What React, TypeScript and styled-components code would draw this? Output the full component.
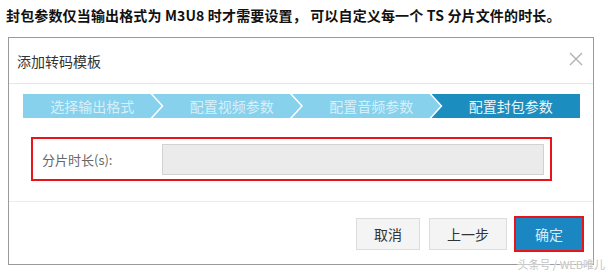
import React from 'react';
import styled, { createGlobalStyle } from 'styled-components';

const GlobalStyle = createGlobalStyle`
  body {
    margin: 0;
    background: #fff;
    font-family: "Noto Sans CJK SC", "Noto Sans", sans-serif;
  }
`;

const steps = ['选择输出格式', '配置视频参数', '配置音频参数', '配置封包参数'];

function App() {
  return (
    <Page>
      <GlobalStyle />
      <Caption>封包参数仅当输出格式为 M3U8 时才需要设置， 可以自定义每一个 TS 分片文件的时长。</Caption>
      <Dialog>
        <Header>
          <Title>添加转码模板</Title>
          <Close aria-label="close">
            <svg width="14" height="14" viewBox="0 0 14 14">
              <path d="M1 1 L13 13 M13 1 L1 13" stroke="#b0b0b0" strokeWidth="1.4" fill="none" />
            </svg>
          </Close>
        </Header>
        <Body>
          <Steps>
            {steps.map((s, i) => (
              <Step key={s} $active={i === steps.length - 1} $first={i === 0} $last={i === steps.length - 1}>
                {s}
              </Step>
            ))}
          </Steps>
          <Field>
            <Label>分片时长(s):</Label>
            <Input disabled />
          </Field>
        </Body>
        <Footer>
          <Button>取消</Button>
          <Button $wide>上一步</Button>
          <Highlight>
            <Button $primary>确定</Button>
          </Highlight>
        </Footer>
        <Watermark>头条号 / WEB唯儿</Watermark>
      </Dialog>
    </Page>
  );
}

const Page = styled.div`
  width: 606px;
  height: 273px;
  overflow: hidden;
`;

const Caption = styled.div`
  padding: 5px 0 0 6px;
  height: 27px;
  font-size: 14px;
  font-weight: 700;
  line-height: 20px;
  color: #111;
  white-space: nowrap;
  letter-spacing: 0.15px;
`;

const Dialog = styled.div`
  position: relative;
  margin: 5px 0 0 8px;
  width: 584px;
  height: 226px;
  border: 1px solid #9a9a9a;
  display: flex;
  flex-direction: column;
`;

const Header = styled.div`
  height: 45px;
  border-bottom: 1px solid #e6e6e6;
  display: flex;
  align-items: center;
  justify-content: space-between;
  padding: 0 9px 0 8px;
`;

const Title = styled.div`
  font-size: 14px;
  color: #333;
  padding-top: 1px;
`;

const Close = styled.div`
  display: flex;
  width: 16px;
  height: 16px;
  align-items: center;
  justify-content: center;
  margin-top: -3px;
`;

const Body = styled.div`
  padding: 10px 13px 0 14px;
  height: 107px;
  border-bottom: 1px solid #ececec;
`;

const Steps = styled.div`
  display: flex;
  height: 24px;
`;

const Step = styled.div<{ $active?: boolean; $first?: boolean; $last?: boolean }>`
  flex: 1;
  display: flex;
  align-items: center;
  justify-content: center;
  margin-left: ${(p) => (p.$first ? '0' : '-9px')};
  padding-left: ${(p) => (p.$first ? '0' : '10px')};
  background: ${(p) => (p.$active ? '#1c8dbf' : '#88d1ed')};
  color: ${(p) => (p.$active ? '#eaf6fc' : '#d6f0fa')};
  font-size: 14px;
  clip-path: ${(p) =>
    `polygon(0 0, ${p.$last ? '100% 0, 100% 100%' : 'calc(100% - 11px) 0, 100% 50%, calc(100% - 11px) 100%'}, 0 100%${
      p.$first ? '' : ', 11px 50%'
    })`};
`;

const Field = styled.div`
  margin: 19px 0 0 8px;
  width: 502px;
  height: 40px;
  border: 2px solid #e8141a;
  display: flex;
  align-items: center;
  padding: 0 6px 0 9px;
  box-sizing: content-box;
`;

const Label = styled.div`
  width: 120px;
  font-size: 13px;
  color: #666;
`;

const Input = styled.input`
  flex: 1;
  height: 31px;
  box-sizing: border-box;
  background: #ebebeb;
  border: 1px solid #d2d2d2;
  margin: 0;
`;

const Footer = styled.div`
  flex: 1;
  display: flex;
  align-items: center;
  justify-content: flex-end;
  gap: 9px;
  padding: 0 9px 0 0;
  margin-top: 1px;
`;

const Button = styled.div<{ $primary?: boolean; $wide?: boolean }>`
  height: 32px;
  box-sizing: border-box;
  display: flex;
  align-items: center;
  justify-content: center;
  font-size: 14px;
  background: ${(p) => (p.$primary ? '#1b87c2' : '#f4f4f4')};
  border: 1px solid ${(p) => (p.$primary ? '#1b87c2' : '#dcdcdc')};
  color: ${(p) => (p.$primary ? '#d5ecf8' : '#333')};
  width: ${(p) => (p.$primary ? '66px' : p.$wide ? '78px' : '64px')};
`;

const Highlight = styled.div`
  border: 2px solid #e8141a;
  margin-left: -2px;
`;

const Watermark = styled.div`
  position: absolute;
  right: -12px;
  bottom: -8px;
  font-size: 11px;
  color: #c4c4c4;
  text-shadow: 0 0 2px #fff, 0 0 1px #fff;
  white-space: nowrap;
`;

export default App;
